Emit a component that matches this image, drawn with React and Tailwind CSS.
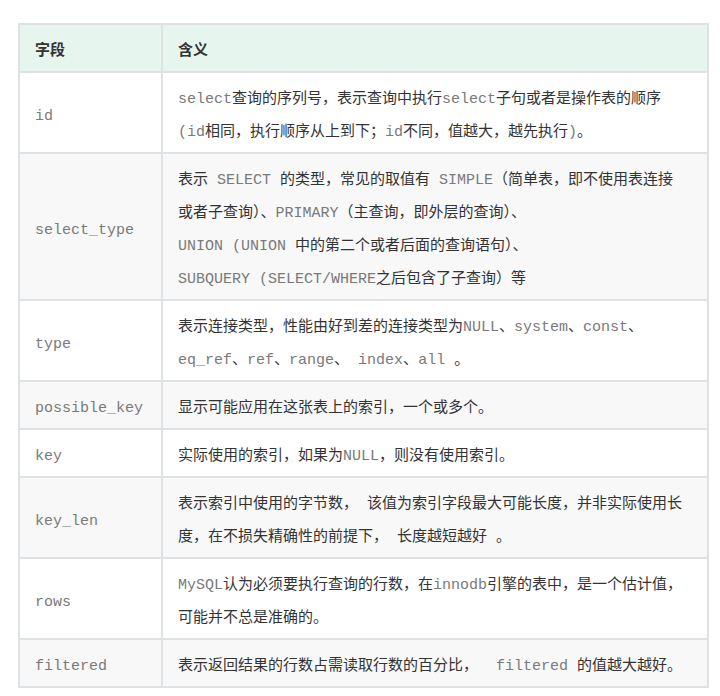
import React from "react";

// Inline code fragment (leading-none so the mono font doesn't grow the line box)
const C = ({ children }) => (
  <code className="font-['Liberation_Mono','Courier_New',monospace] text-[15px] leading-none text-[#7a7a7a]">
    {children}
  </code>
);

// Table rows: field name and its description (lines split as in the doc)
const rows = [
  {
    name: "id",
    desc: (
      <>
        <C>select</C>查询的序列号，表示查询中执行<C>select</C>子句或者是操作表的顺序
        <br />
        <C>(id</C>相同，执行顺序从上到下；<C>id</C>不同，值越大，越先执行<C>)</C>。
      </>
    ),
  },
  {
    name: "select_type",
    desc: (
      <>
        表示<C> SELECT </C>的类型，常见的取值有<C> SIMPLE</C>（简单表，即不使用表连接
        <br />
        或者子查询）、<C>PRIMARY</C>（主查询，即外层的查询）、
        <br />
        <C>UNION (UNION </C>中的第二个或者后面的查询语句）、
        <br />
        <C>SUBQUERY (SELECT/WHERE</C>之后包含了子查询）等
      </>
    ),
  },
  {
    name: "type",
    desc: (
      <>
        表示连接类型，性能由好到差的连接类型为<C>NULL</C>、<C>system</C>、<C>const</C>、
        <br />
        <C>eq_ref</C>、<C>ref</C>、<C>range</C>、<C> index</C>、<C>all </C>。
      </>
    ),
  },
  {
    name: "possible_key",
    desc: <>显示可能应用在这张表上的索引，一个或多个。</>,
  },
  {
    name: "key",
    desc: (
      <>
        实际使用的索引，如果为<C>NULL</C>，则没有使用索引。
      </>
    ),
  },
  {
    name: "key_len",
    desc: (
      <>
        表示索引中使用的字节数，<C> </C>该值为索引字段最大可能长度，并非实际使用长
        <br />
        度，在不损失精确性的前提下，<C> </C>长度越短越好<C> </C>。
      </>
    ),
  },
  {
    name: "rows",
    desc: (
      <>
        <C>MySQL</C>认为必须要执行查询的行数，在<C>innodb</C>引擎的表中，是一个估计值，
        <br />
        可能并不总是准确的。
      </>
    ),
  },
  {
    name: "filtered",
    desc: (
      <>
        表示返回结果的行数占需读取行数的百分比，<C>  filtered </C>的值越大越好。
      </>
    ),
  },
];

const cell =
  "border-2 border-[#dfe2e5] px-[15px] pt-[7px] pb-[6px] text-left align-middle leading-[33px]";

const App = () => {
  return (
    <div className="min-h-[696px] w-[720px] bg-white pt-[23px] pl-[18px] font-['Noto_Sans_CJK_SC','Noto_Sans',sans-serif] text-[15px] text-[#333]">
      <table className="w-[691px] table-fixed border-collapse border-2 border-[#dfe2e5]">
        <colgroup>
          <col className="w-[143px]" />
          <col />
        </colgroup>
        <thead>
          <tr className="bg-[#e6f6ee]">
            <th className={`${cell} font-bold`}>字段</th>
            <th className={`${cell} font-bold`}>含义</th>
          </tr>
        </thead>
        <tbody>
          {rows.map((r, i) => (
            <tr key={r.name} className={i % 2 === 1 ? "bg-[#f8f8f8]" : "bg-white"}>
              <td className={cell}>
                <C>{r.name}</C>
              </td>
              <td className={`${cell} whitespace-pre`}>{r.desc}</td>
            </tr>
          ))}
        </tbody>
      </table>
    </div>
  );
};

export default App;
